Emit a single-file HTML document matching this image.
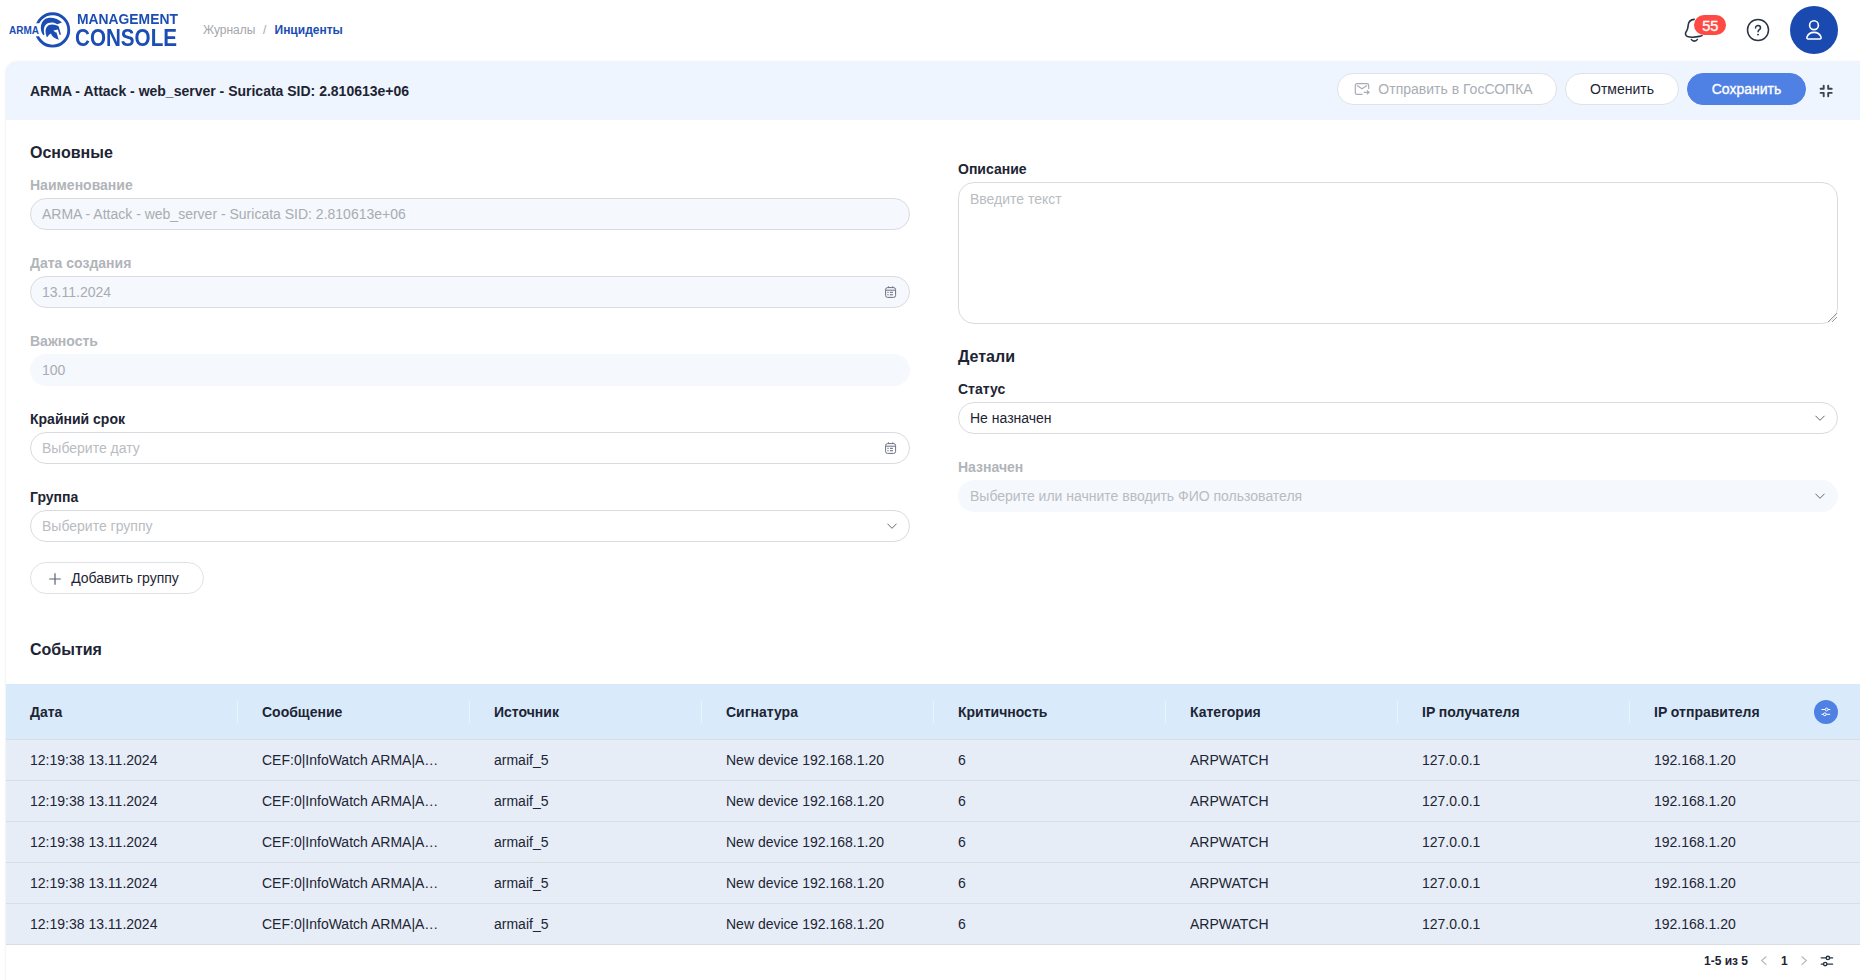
<!DOCTYPE html>
<html><head><meta charset="utf-8">
<style>
*{box-sizing:border-box;margin:0;padding:0}
html,body{width:1860px;height:980px;overflow:hidden;background:#fff;font-family:"Liberation Sans",sans-serif;color:#1d2433}
.a{position:absolute;white-space:nowrap}
.card{position:absolute;left:6px;top:61px;width:1870px;height:940px;background:#fff;border-radius:12px 0 0 0;box-shadow:-1px 0 2px rgba(0,0,0,0.05)}
.band{position:absolute;left:6px;top:61px;width:1870px;height:59px;background:#eef5fe;border-radius:12px 0 0 0}
.title{left:30px;top:83px;font-size:14px;font-weight:bold;color:#1d2433}
.btn{position:absolute;height:32px;border-radius:16px;border:1px solid #dfe2e6;background:#fff;font-size:14px;line-height:30px;text-align:center}
.sec{font-size:16px;font-weight:bold;color:#1d2433}
.lbl{font-size:14px;font-weight:bold;color:#1d2433}
.lbl.dis{color:#b1b4b9}
.inp{position:absolute;height:32px;border-radius:16px;border:1px solid #d9dbdf;background:#fff;font-size:14px;line-height:30px;padding-left:11px;color:#1d2433}
.inp.dis{background:#f5f8fd;color:#a9acb1}
.inp.nob{border-color:transparent}
.ph{color:#b9bcc1}
.th{position:absolute;top:684px;left:6px;width:1860px;height:55px;background:#d9ebfb}
.row{position:absolute;left:6px;width:1860px;height:41px;background:#e6edf7;border-top:1px solid #dadde1}
.hc{font-size:14px;font-weight:bold;top:704px;color:#1d2433}
.cell{font-size:14px;color:#1d2433}
.div{position:absolute;top:701px;width:1px;height:22px;background:#eaf3fc}
</style></head><body>
<!-- top bar -->
<div class="a" style="left:9px;top:24.5px;font-size:10px;font-weight:bold;color:#1b4db4;line-height:12px">ARMA</div>
<svg class="a" style="left:30px;top:8px" width="45" height="44" viewBox="0 0 1002 980">
<defs><mask id="gm"><rect x="0" y="0" width="1002" height="980" fill="#fff"/><rect x="0" y="340" width="270" height="290" fill="#000"/></mask></defs>
<circle cx="502" cy="488" r="361" fill="none" stroke="#1b4db4" stroke-width="64" mask="url(#gm)"/>
<path fill="#1b4db4" d="M300,605 C215,520 220,320 330,250 C410,200 575,200 712,322 L608,362 C520,305 410,318 345,378 C302,428 300,520 322,592 Z"/>
<path fill="#1b4db4" d="M375,655 L350,560 C330,440 400,365 490,365 C560,365 620,390 640,410 L690,590 L660,600 L620,480 L520,500 L560,540 L590,545 L640,705 C560,690 490,640 465,570 L430,590 Z"/>
</svg>
<div class="a" style="left:77px;top:10.6px;font-size:14px;font-weight:bold;color:#1b4db4;line-height:17px;transform:scaleX(0.99);transform-origin:0 0">MANAGEMENT</div>
<div class="a" style="left:75px;top:23.5px;font-size:24.8px;font-weight:bold;color:#1b4db4;line-height:27px;transform:scaleX(0.832);transform-origin:0 0">CONSOLE</div>

<div class="a" style="left:203px;top:23px;font-size:12px;color:#a3a6ab">Журналы<span style="position:absolute;left:60px">/</span><b style="position:absolute;left:71.5px;color:#1b4db4">Инциденты</b></div>


<svg class="a" style="left:1680px;top:14px" width="50" height="30" viewBox="0 0 50 30">
<path d="M14.2,5.4 C11.2,5.6 8.6,7.8 8.2,11 C7.9,13.5 7.9,15.3 6.6,17 C5,19 5,21.6 7.4,22.5 C10,23.4 16,23.2 20.7,22.1 L22,21.6" fill="none" stroke="#2b3443" stroke-width="1.6" stroke-linecap="round"/>
<path d="M11.4,25.5 C12.5,27.6 16.2,27.6 17.3,25.5" fill="none" stroke="#2b3443" stroke-width="1.6" stroke-linecap="round"/>
<rect x="14" y="1" width="32" height="20" rx="10" fill="#fe4a42"/>
<text x="30.3" y="16.8" text-anchor="middle" font-family="Liberation Sans" font-size="14.6" fill="#fff" stroke="#fff" stroke-width="0.35">55</text>
</svg>
<svg class="a" style="left:1746px;top:18px" width="24" height="24" viewBox="0 0 24 24">
<circle cx="12" cy="12" r="10.5" fill="none" stroke="#2b3443" stroke-width="1.5"/>
<path d="M9.5,10 C9.5,8.5 10.6,7.6 12,7.6 C13.5,7.6 14.5,8.6 14.5,9.9 C14.5,11.6 12.1,11.8 12.1,13.8" fill="none" stroke="#2b3443" stroke-width="1.5" stroke-linecap="round"/>
<circle cx="12" cy="16.6" r="0.95" fill="#2b3443"/>
</svg>
<svg class="a" style="left:1790px;top:6px" width="48" height="48" viewBox="0 0 48 48">
<circle cx="24" cy="24" r="24" fill="#1a4ab0"/>
<circle cx="24" cy="19.2" r="4.4" fill="none" stroke="#fff" stroke-width="1.6"/>
<path d="M18.3,33 C17,33 16.6,32.1 17.1,30.8 C18.2,28 20.8,26.4 24,26.4 C27.2,26.4 29.8,28 30.9,30.8 C31.4,32.1 31,33 29.7,33 Z" fill="none" stroke="#fff" stroke-width="1.6"/>
</svg>
<div class="card"></div>
<div class="band"></div>
<div class="a title">ARMA - Attack - web_server - Suricata SID: 2.810613e+06</div>

<div class="btn" style="left:1337px;top:73px;width:220px;color:#a9adb4;padding-left:17px">Отправить в ГосСОПКА</div>
<div class="btn" style="left:1565px;top:73px;width:114px;color:#1d2433">Отменить</div>
<div class="btn" style="left:1687px;top:73px;width:119px;background:#4f81e5;border-color:#4f81e5;color:#fff;-webkit-text-stroke:0.35px #fff">Сохранить</div>


<svg class="a" style="left:1354px;top:82px" width="16" height="14" viewBox="0 0 16 14">
<path d="M8.5,12.4 L3,12.4 C2,12.4 1.3,11.7 1.3,10.7 L1.3,3.4 C1.3,2.4 2,1.7 3,1.7 L13,1.7 C14,1.7 14.7,2.4 14.7,3.4 L14.7,7" fill="none" stroke="#a9acb1" stroke-width="1.2"/>
<path d="M3,3.6 L8,6.8 L13,3.6" fill="none" stroke="#a9acb1" stroke-width="1.2"/>
<path d="M9.8,10.3 L15,10.3 M13,8.3 L15,10.3 L13,12.3" fill="none" stroke="#a9acb1" stroke-width="1.2"/>
</svg>
<svg class="a" style="left:1817px;top:82px" width="18" height="18" viewBox="0 0 18 18">
<path d="M6.7,3.7 L6.7,6.8 L3.6,6.8 M11.2,3.7 L11.2,6.8 L14.7,6.8 M6.7,14.3 L6.7,10.9 L3.6,10.9 M11.2,14.3 L11.2,10.9 L14.7,10.9" fill="none" stroke="#3a4350" stroke-width="1.9" stroke-linecap="round" stroke-linejoin="round"/>
</svg>
<div class="a sec" style="left:30px;top:144px">Основные</div>
<div class="a lbl dis" style="left:30px;top:177px">Наименование</div>
<div class="inp dis" style="left:30px;top:198px;width:880px">ARMA - Attack - web_server - Suricata SID: 2.810613e+06</div>
<div class="a lbl dis" style="left:30px;top:255px">Дата создания</div>
<div class="inp dis" style="left:30px;top:276px;width:880px">13.11.2024</div>
<div class="a lbl dis" style="left:30px;top:333px">Важность</div>
<div class="inp dis nob" style="left:30px;top:354px;width:880px">100</div>
<div class="a lbl" style="left:30px;top:411px">Крайний срок</div>
<div class="inp" style="left:30px;top:432px;width:880px"><span class="ph">Выберите дату</span></div>
<div class="a lbl" style="left:30px;top:489px">Группа</div>
<div class="inp" style="left:30px;top:510px;width:880px"><span class="ph">Выберите группу</span></div>
<div class="btn" style="left:30px;top:562px;width:174px;color:#1d2433;padding-left:16px">Добавить группу</div>

<div class="a lbl" style="left:958px;top:161px">Описание</div>
<div class="inp" style="left:958px;top:182px;width:880px;height:142px;border-radius:16px;line-height:18px;padding-top:7px"><span class="ph">Введите текст</span></div>
<svg class="a" style="left:1826px;top:311px" width="12" height="12" viewBox="0 0 12 12"><path d="M2,11 L11,2 M6,11 L11,6" stroke="#8a8f96" stroke-width="0.9"/></svg>
<div class="a sec" style="left:958px;top:348px">Детали</div>
<div class="a lbl" style="left:958px;top:381px">Статус</div>
<div class="inp" style="left:958px;top:402px;width:880px">Не назначен</div>
<div class="a lbl dis" style="left:958px;top:459px">Назначен</div>
<div class="inp dis nob" style="left:958px;top:480px;width:880px"><span class="ph">Выберите или начните вводить ФИО пользователя</span></div>

<svg class="a" style="left:884px;top:285px" width="14" height="14" viewBox="0 0 14 14">
<rect x="1.6" y="2.6" width="10" height="9.8" rx="2" fill="none" stroke="#6b7380" stroke-width="1"/>
<path d="M1.6,5.2 L11.6,5.2 M4.4,1.3 L4.4,3 M8.8,1.3 L8.8,3" stroke="#6b7380" stroke-width="1"/>
<g fill="#6b7380"><rect x="3.4" y="6.8" width="1.2" height="1.1"/><rect x="5.9" y="6.8" width="3" height="1.1"/><rect x="3.4" y="9.2" width="1.2" height="1.1"/><rect x="5.9" y="9.2" width="3" height="1.1"/></g>
</svg><svg class="a" style="left:884px;top:441px" width="14" height="14" viewBox="0 0 14 14">
<rect x="1.6" y="2.6" width="10" height="9.8" rx="2" fill="none" stroke="#6b7380" stroke-width="1"/>
<path d="M1.6,5.2 L11.6,5.2 M4.4,1.3 L4.4,3 M8.8,1.3 L8.8,3" stroke="#6b7380" stroke-width="1"/>
<g fill="#6b7380"><rect x="3.4" y="6.8" width="1.2" height="1.1"/><rect x="5.9" y="6.8" width="3" height="1.1"/><rect x="3.4" y="9.2" width="1.2" height="1.1"/><rect x="5.9" y="9.2" width="3" height="1.1"/></g>
</svg><svg class="a" style="left:886px;top:522px" width="12" height="8" viewBox="0 0 12 8"><path d="M1.5,1.8 L6,6.3 L10.5,1.8" fill="none" stroke="#5f6773" stroke-width="1"/></svg><svg class="a" style="left:1814px;top:414px" width="12" height="8" viewBox="0 0 12 8"><path d="M1.5,1.8 L6,6.3 L10.5,1.8" fill="none" stroke="#5f6773" stroke-width="1"/></svg><svg class="a" style="left:1814px;top:492px" width="12" height="8" viewBox="0 0 12 8"><path d="M1.5,1.8 L6,6.3 L10.5,1.8" fill="none" stroke="#5f6773" stroke-width="1"/></svg><svg class="a" style="left:48px;top:572px" width="14" height="14" viewBox="0 0 14 14"><path d="M7,1.2 L7,12.8 M1.2,7 L12.8,7" stroke="#596170" stroke-width="1.2"/></svg>
<div class="a sec" style="left:30px;top:641px">События</div>

<div class="th"></div>
<div class="a hc" style="left:30px">Дата</div>
<div class="a hc" style="left:262px">Сообщение</div>
<div class="div" style="left:237px"></div>
<div class="a hc" style="left:494px">Источник</div>
<div class="div" style="left:469px"></div>
<div class="a hc" style="left:726px">Сигнатура</div>
<div class="div" style="left:701px"></div>
<div class="a hc" style="left:958px">Критичность</div>
<div class="div" style="left:933px"></div>
<div class="a hc" style="left:1190px">Категория</div>
<div class="div" style="left:1165px"></div>
<div class="a hc" style="left:1422px">IP получателя</div>
<div class="div" style="left:1397px"></div>
<div class="a hc" style="left:1654px">IP отправителя</div>
<div class="div" style="left:1629px"></div>
<svg class="a" style="left:1814px;top:700px" width="24" height="24" viewBox="0 0 24 24"><circle cx="12" cy="12" r="12" fill="#4f81e5"/>
<path d="M7.5,9.5 L16.2,9.5 M7.5,14.3 L16.2,14.3" stroke="#fff" stroke-width="1"/><circle cx="12.6" cy="9.5" r="1.4" fill="#4f81e5" stroke="#fff" stroke-width="1"/><circle cx="10.8" cy="14.3" r="1.4" fill="#4f81e5" stroke="#fff" stroke-width="1"/></svg>
<div class="row" style="top:739px"></div>
<div class="a cell" style="left:30px;top:752px">12:19:38 13.11.2024</div>
<div class="a cell" style="left:262px;top:752px">CEF:0|InfoWatch ARMA|A…</div>
<div class="a cell" style="left:494px;top:752px">armaif_5</div>
<div class="a cell" style="left:726px;top:752px">New device 192.168.1.20</div>
<div class="a cell" style="left:958px;top:752px">6</div>
<div class="a cell" style="left:1190px;top:752px">ARPWATCH</div>
<div class="a cell" style="left:1422px;top:752px">127.0.0.1</div>
<div class="a cell" style="left:1654px;top:752px">192.168.1.20</div>
<div class="row" style="top:780px"></div>
<div class="a cell" style="left:30px;top:793px">12:19:38 13.11.2024</div>
<div class="a cell" style="left:262px;top:793px">CEF:0|InfoWatch ARMA|A…</div>
<div class="a cell" style="left:494px;top:793px">armaif_5</div>
<div class="a cell" style="left:726px;top:793px">New device 192.168.1.20</div>
<div class="a cell" style="left:958px;top:793px">6</div>
<div class="a cell" style="left:1190px;top:793px">ARPWATCH</div>
<div class="a cell" style="left:1422px;top:793px">127.0.0.1</div>
<div class="a cell" style="left:1654px;top:793px">192.168.1.20</div>
<div class="row" style="top:821px"></div>
<div class="a cell" style="left:30px;top:834px">12:19:38 13.11.2024</div>
<div class="a cell" style="left:262px;top:834px">CEF:0|InfoWatch ARMA|A…</div>
<div class="a cell" style="left:494px;top:834px">armaif_5</div>
<div class="a cell" style="left:726px;top:834px">New device 192.168.1.20</div>
<div class="a cell" style="left:958px;top:834px">6</div>
<div class="a cell" style="left:1190px;top:834px">ARPWATCH</div>
<div class="a cell" style="left:1422px;top:834px">127.0.0.1</div>
<div class="a cell" style="left:1654px;top:834px">192.168.1.20</div>
<div class="row" style="top:862px"></div>
<div class="a cell" style="left:30px;top:875px">12:19:38 13.11.2024</div>
<div class="a cell" style="left:262px;top:875px">CEF:0|InfoWatch ARMA|A…</div>
<div class="a cell" style="left:494px;top:875px">armaif_5</div>
<div class="a cell" style="left:726px;top:875px">New device 192.168.1.20</div>
<div class="a cell" style="left:958px;top:875px">6</div>
<div class="a cell" style="left:1190px;top:875px">ARPWATCH</div>
<div class="a cell" style="left:1422px;top:875px">127.0.0.1</div>
<div class="a cell" style="left:1654px;top:875px">192.168.1.20</div>
<div class="row" style="top:903px"></div>
<div class="a cell" style="left:30px;top:916px">12:19:38 13.11.2024</div>
<div class="a cell" style="left:262px;top:916px">CEF:0|InfoWatch ARMA|A…</div>
<div class="a cell" style="left:494px;top:916px">armaif_5</div>
<div class="a cell" style="left:726px;top:916px">New device 192.168.1.20</div>
<div class="a cell" style="left:958px;top:916px">6</div>
<div class="a cell" style="left:1190px;top:916px">ARPWATCH</div>
<div class="a cell" style="left:1422px;top:916px">127.0.0.1</div>
<div class="a cell" style="left:1654px;top:916px">192.168.1.20</div>
<div class="a" style="left:6px;top:944px;width:1860px;height:1px;background:#dadde1"></div>
<div class="a" style="left:1704px;top:954px;font-size:12px;font-weight:bold;color:#1d2433">1-5 из 5</div>
<svg class="a" style="left:1758px;top:953px" width="12" height="14" viewBox="0 0 12 14"><path d="M8.4,3.5 L3.7,7.6 L8.4,11.7" fill="none" stroke="#b5b9be" stroke-width="1.2"/></svg>
<div class="a" style="left:1781px;top:954px;font-size:12px;font-weight:bold;color:#1d2433">1</div>
<svg class="a" style="left:1798px;top:953px" width="12" height="14" viewBox="0 0 12 14"><path d="M3.6,3.5 L8.3,7.6 L3.6,11.7" fill="none" stroke="#b5b9be" stroke-width="1.2"/></svg>
<svg class="a" style="left:1819px;top:953px" width="16" height="16" viewBox="0 0 16 16"><path d="M2.3,4.9 L13.6,4.9 M2.3,11.1 L13.6,11.1" stroke="#2b3443" stroke-width="1.4" stroke-linecap="round"/><circle cx="8.9" cy="4.9" r="1.7" fill="#fff" stroke="#2b3443" stroke-width="1.4"/><circle cx="6.2" cy="11.1" r="1.7" fill="#fff" stroke="#2b3443" stroke-width="1.4"/></svg>
</body></html>
